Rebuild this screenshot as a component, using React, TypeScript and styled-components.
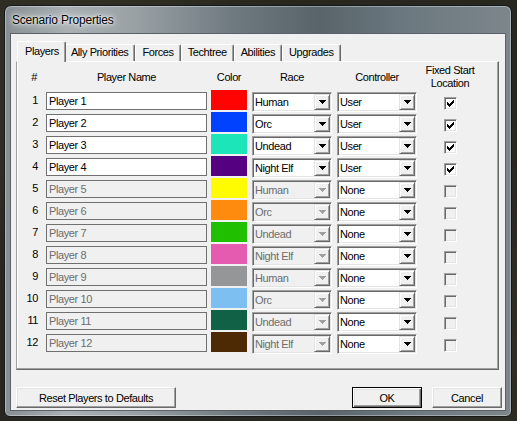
import React from "react";
import styled, { createGlobalStyle, css } from "styled-components";

const GlobalStyle = createGlobalStyle`
  html, body { margin: 0; padding: 0; }
  body {
    background: #27261f;
    font-family: "Liberation Sans", Arial, sans-serif;
  }
  * { box-sizing: border-box; }
`;

const uiFont = css`
  font-family: "Liberation Sans", Arial, sans-serif;
  font-size: 11px;
  letter-spacing: -0.4px;
`;

const Desktop = styled.div`
  width: 517px;
  height: 421px;
  padding: 5px 0 0 4px;
  overflow: hidden;
  background:
    radial-gradient(circle at 15% 20%, rgba(80, 76, 56, 0.35), transparent 40%),
    radial-gradient(circle at 85% 85%, rgba(70, 68, 50, 0.35), transparent 45%),
    #27261f;
`;

const Window = styled.div`
  width: 508px;
  height: 412px;
  display: flex;
  flex-direction: column;
  padding: 0 5px 5px;
  border: 1px solid #15191b;
  border-radius: 7px 7px 6px 6px;
  background: linear-gradient(
    90deg,
    #868e92 0%,
    #a9b0b3 12%,
    #9aa2a6 25%,
    #6f7a80 45%,
    #58636a 62%,
    #6d7980 80%,
    #7c868b 100%
  );
  box-shadow: inset 0 0 0 1px rgba(255, 255, 255, 0.35);
`;

const TitleBar = styled.div`
  height: 27px;
  flex: none;
  display: flex;
  align-items: center;
  padding-left: 2px;
  font-family: "Liberation Sans", Arial, sans-serif;
  font-size: 12px;
  letter-spacing: -0.2px;
  color: #000;
  text-shadow: 0 0 8px #fff, 0 0 5px rgba(255, 255, 255, 0.9), 0 0 2px #fff;
`;

const Client = styled.div`
  flex: 1;
  display: flex;
  flex-direction: column;
  border: 1px solid #5a6267;
  background: #f0f0f0;
  padding: 7px 6px 0 5px;
`;

const TabControl = styled.div`
  width: 483px;
  display: flex;
  flex-direction: column;
`;

const TabStrip = styled.div`
  height: 20px;
  display: flex;
  align-items: flex-end;
  padding-left: 3px;
  position: relative;
  z-index: 1;
`;

const Tab = styled.div<{ $active?: boolean }>`
  ${uiFont}
  height: 17px;
  padding: 0 6px;
  line-height: 15px;
  color: #000;
  white-space: nowrap;
  background: #f0f0f0;
  border-top: 1px solid #fff;
  border-left: 1px solid #fff;
  border-right: 1px solid #696969;
  border-radius: 2px 2px 0 0;
  box-shadow: inset -1px 0 #a0a0a0;
  ${(p) =>
    p.$active &&
    css`
      height: 21px;
      margin: 0 -2px -1px;
      padding: 0 6px 0 7px;
      line-height: 18px;
      position: relative;
      z-index: 2;
    `}
`;

const Panel = styled.div`
  height: 309px;
  border-top: 1px solid #fff;
  border-left: 1px solid #a0a0a0;
  border-right: 1px solid #696969;
  border-bottom: 1px solid #696969;
  box-shadow: inset -1px -1px #a0a0a0, inset 1px 0 #fff;
  padding: 2px 0 0 1px;
`;

const Grid = styled.div`
  display: grid;
  grid-template-columns: 28px 165px 41px 85px 85px 56px;
  grid-template-rows: 26px;
  grid-auto-rows: 22px;
  align-items: start;
`;

const HeaderCell = styled.div<{ $w: number; $right?: boolean }>`
  ${uiFont}
  width: ${(p) => p.$w}px;
  height: 26px;
  display: flex;
  align-items: center;
  justify-content: ${(p) => (p.$right ? "flex-end" : "center")};
  padding-right: ${(p) => (p.$right ? 9 : 0)}px;
  text-align: center;
  line-height: 13px;
  color: #000;
`;

const NumCell = styled.div`
  ${uiFont}
  height: 22px;
  line-height: 21px;
  text-align: right;
  padding-right: 8px;
  color: #000;
`;

const NameField = styled.input`
  ${uiFont}
  display: block;
  width: 161px;
  height: 18px;
  margin: 2px 0 0;
  padding: 0 2px;
  border: 1px solid #707070;
  border-radius: 0;
  outline: none;
  background: #fff;
  color: #000;
  &:disabled {
    background: #f0f0f0;
    color: #6d6d6d;
    -webkit-text-fill-color: #6d6d6d;
    opacity: 1;
  }
`;

const Swatch = styled.div<{ $color: string }>`
  width: 36px;
  height: 20px;
  background: ${(p) => p.$color};
`;

const Combo = styled.div<{ $disabled?: boolean }>`
  ${uiFont}
  width: 80px;
  height: 20px;
  margin-top: 2px;
  display: flex;
  align-items: center;
  padding: 1px;
  border-top: 1px solid #a0a0a0;
  border-left: 1px solid #a0a0a0;
  border-bottom: 1px solid #fff;
  border-right: 1px solid #fff;
  box-shadow: inset 1px 1px #696969, inset -1px -1px #e3e3e3;
  background: ${(p) => (p.$disabled ? "#f0f0f0" : "#fff")};
  color: ${(p) => (p.$disabled ? "#6d6d6d" : "#000")};
`;

const ComboText = styled.span`
  flex: 1;
  padding-left: 1px;
  line-height: 16px;
  white-space: nowrap;
  overflow: hidden;
`;

const DropButton = styled.span`
  width: 16px;
  height: 16px;
  flex: none;
  display: flex;
  align-items: center;
  justify-content: center;
  background: #f0f0f0;
  border-top: 1px solid #e3e3e3;
  border-left: 1px solid #e3e3e3;
  border-right: 1px solid #696969;
  border-bottom: 1px solid #696969;
  box-shadow: inset 1px 1px #fff, inset -1px -1px #a0a0a0;
`;

const CheckBox = styled.div<{ $disabled?: boolean }>`
  width: 13px;
  height: 13px;
  margin-top: 7px;
  justify-self: center;
  display: flex;
  padding: 2px 0 0 2px;
  border-top: 1px solid #a0a0a0;
  border-left: 1px solid #a0a0a0;
  border-bottom: 1px solid #fff;
  border-right: 1px solid #fff;
  box-shadow: inset 1px 1px #696969, inset -1px -1px #e3e3e3;
  background: ${(p) => (p.$disabled ? "#f0f0f0" : "#fff")};
`;

const ButtonRow = styled.div`
  display: flex;
  gap: 10px;
  margin-top: 17px;
  margin-right: -3px;
`;

const Button = styled.button<{ $w: number; $default?: boolean; $push?: boolean }>`
  ${uiFont}
  width: ${(p) => p.$w}px;
  height: 21px;
  padding: 0;
  margin-left: ${(p) => (p.$push ? "auto" : "0")};
  color: #000;
  background: #f0f0f0;
  border-radius: 0;
  ${(p) =>
    p.$default
      ? css`
          border: 1px solid #000;
          box-shadow: inset 1px 1px #fff, inset -1px -1px #696969,
            inset -2px -2px #a0a0a0, inset 2px 2px #e3e3e3;
        `
      : css`
          border-top: 1px solid #fff;
          border-left: 1px solid #fff;
          border-right: 1px solid #696969;
          border-bottom: 1px solid #696969;
          box-shadow: inset -1px -1px #a0a0a0, inset 1px 1px #e3e3e3;
        `}
`;

const Arrow = ({ disabled }: { disabled?: boolean }) => (
  <svg width="7" height="4" viewBox="0 0 7 4" shapeRendering="crispEdges">
    <path
      d="M0 0h7v1H0z M1 1h5v1H1z M2 2h3v1H2z M3 3h1v1H3z"
      fill={disabled ? "#a0a0a0" : "#000"}
    />
  </svg>
);

const Check = () => (
  <svg width="7" height="7" viewBox="0 0 7 7" shapeRendering="crispEdges">
    <path
      d="M6 0h1v1h-1z M5 1h2v1h-2z M0 2h1v1H0z M4 2h3v1H4z M0 3h2v1H0z M3 3h3v1H3z M0 4h5v1H0z M1 5h3v1H1z M2 6h1v1H2z"
      fill="#000"
    />
  </svg>
);

const races = ["Human", "Orc", "Undead", "Night Elf"];
const colors = [
  "#ff0303",
  "#0042ff",
  "#1ce6b9",
  "#540081",
  "#fffc01",
  "#fe8a0e",
  "#20c000",
  "#e55bb0",
  "#959697",
  "#7ebff1",
  "#106246",
  "#4e2a04",
];

const tabs = ["Players", "Ally Priorities", "Forces", "Techtree", "Abilities", "Upgrades"];

export default function App() {
  return (
    <>
      <GlobalStyle />
      <Desktop>
        <Window>
          <TitleBar>Scenario Properties</TitleBar>
          <Client>
            <TabControl>
              <TabStrip>
                {tabs.map((t, i) => (
                  <Tab key={t} $active={i === 0}>
                    {t}
                  </Tab>
                ))}
              </TabStrip>
              <Panel>
                <Grid>
                  <HeaderCell $w={28} $right>
                    #
                  </HeaderCell>
                  <HeaderCell $w={161}>Player Name</HeaderCell>
                  <HeaderCell $w={36}>Color</HeaderCell>
                  <HeaderCell $w={80}>Race</HeaderCell>
                  <HeaderCell $w={80}>Controller</HeaderCell>
                  <HeaderCell $w={56}>
                    Fixed Start
                    <br />
                    Location
                  </HeaderCell>
                  {colors.map((c, i) => {
                    const active = i < 4;
                    return (
                      <React.Fragment key={i}>
                        <NumCell>{i + 1}</NumCell>
                        <NameField
                          readOnly
                          disabled={!active}
                          defaultValue={`Player ${i + 1}`}
                        />
                        <Swatch $color={c} />
                        <Combo $disabled={!active}>
                          <ComboText>{races[i % 4]}</ComboText>
                          <DropButton>
                            <Arrow disabled={!active} />
                          </DropButton>
                        </Combo>
                        <Combo>
                          <ComboText>{active ? "User" : "None"}</ComboText>
                          <DropButton>
                            <Arrow />
                          </DropButton>
                        </Combo>
                        <CheckBox $disabled={!active}>{active && <Check />}</CheckBox>
                      </React.Fragment>
                    );
                  })}
                </Grid>
              </Panel>
            </TabControl>
            <ButtonRow>
              <Button $w={160}>Reset Players to Defaults</Button>
              <Button $w={70} $default $push>
                OK
              </Button>
              <Button $w={70}>Cancel</Button>
            </ButtonRow>
          </Client>
        </Window>
      </Desktop>
    </>
  );
}
